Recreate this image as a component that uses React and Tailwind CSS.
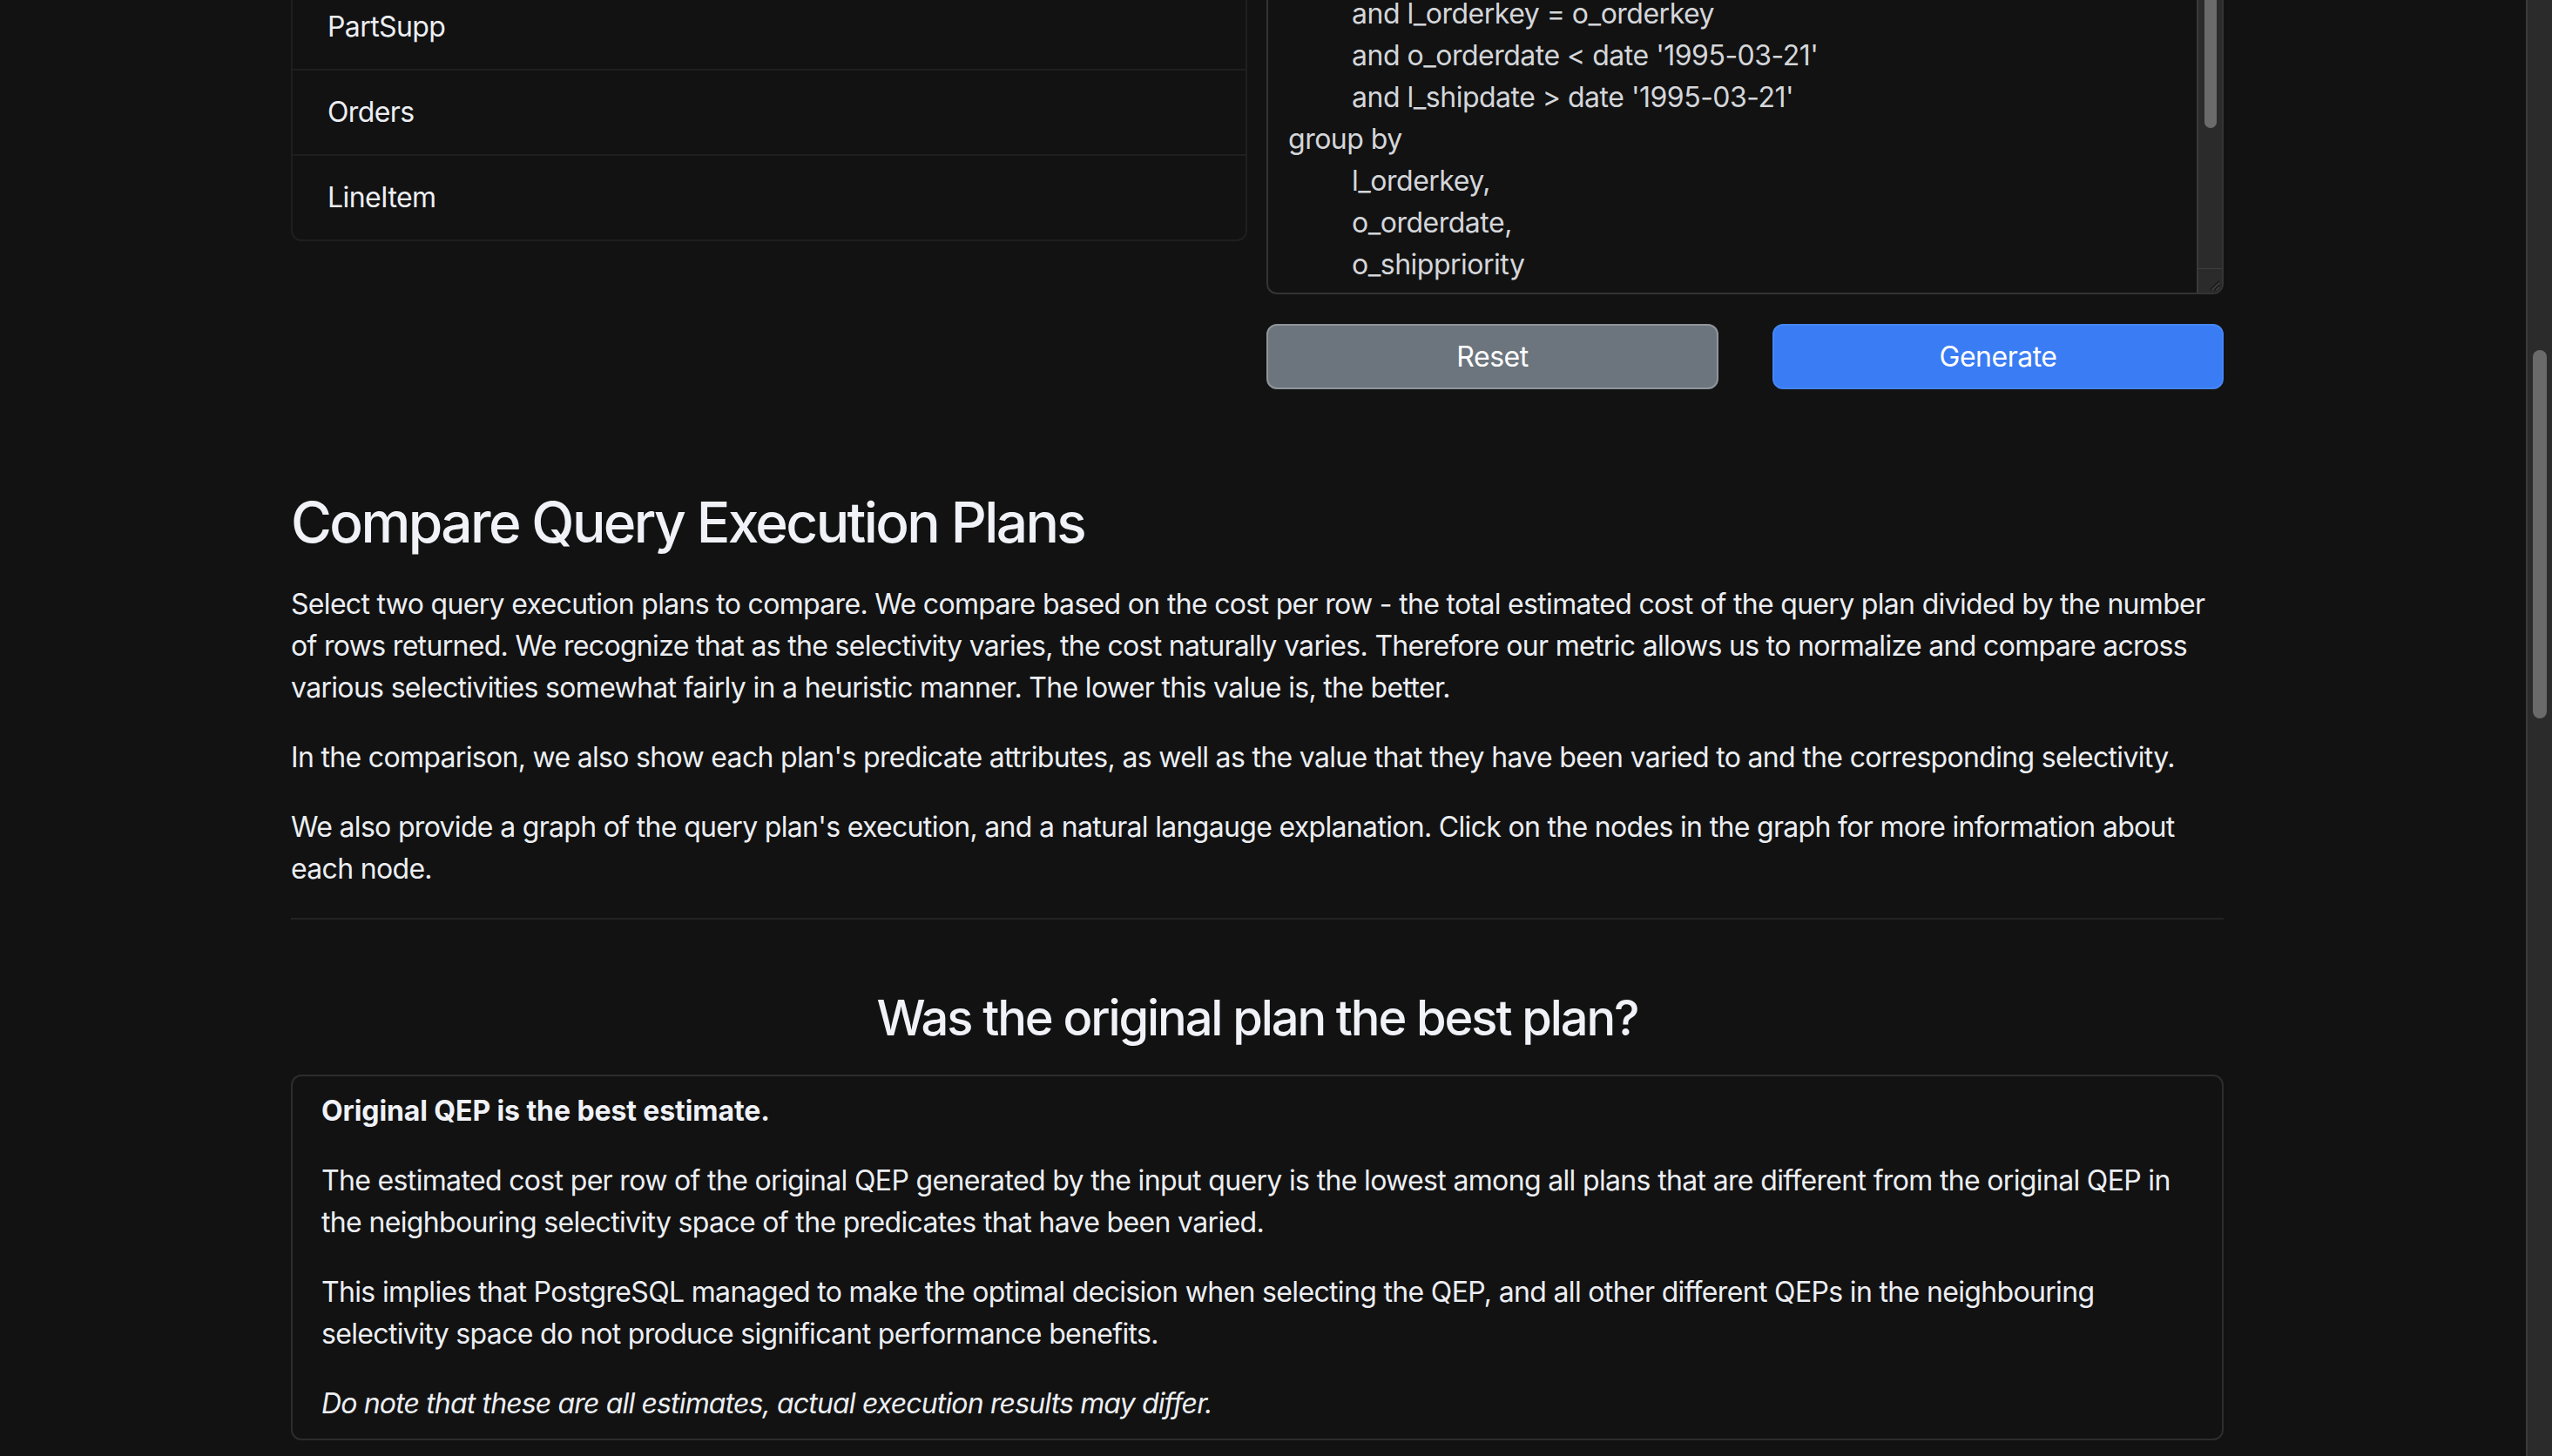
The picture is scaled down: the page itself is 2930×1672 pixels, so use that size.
import React from "react";

const queryLines = [
  { t: "select", i: false },
  { t: "l_orderkey,", i: true },
  { t: "sum(l_extendedprice * (1 - l_discount)) as revenue,", i: true },
  { t: "o_orderdate,", i: true },
  { t: "o_shippriority", i: true },
  { t: "from", i: false },
  { t: "customer,", i: true },
  { t: "orders,", i: true },
  { t: "lineitem", i: true },
  { t: "where", i: false },
  { t: "c_mktsegment = 'BUILDING'", i: true },
  { t: "and c_custkey = o_custkey", i: true },
  { t: "and l_orderkey = o_orderkey", i: true },
  { t: "and o_orderdate < date '1995-03-21'", i: true },
  { t: "and l_shipdate > date '1995-03-21'", i: true },
  { t: "group by", i: false },
  { t: "l_orderkey,", i: true },
  { t: "o_orderdate,", i: true },
  { t: "o_shippriority", i: true },
  { t: "order by", i: false },
  { t: "revenue desc,", i: true },
  { t: "o_orderdate", i: true },
  { t: "limit 20;", i: false },
];

function ListRow({ label, last }) {
  return (
    <div
      className={
        "py-[24px] pl-[40px] pr-[32px] text-[32px] leading-[48px] tracking-[-0.6px] text-[#eceef2] " +
        (last ? "" : "border-b-2 border-[#1f1f1f]")
      }
    >
      {label}
    </div>
  );
}

export default function App() {
  return (
    <div className="flex h-[1672px] w-[2930px] overflow-hidden bg-[#121212] font-['Inter','Liberation_Sans',sans-serif] text-[#eceef2]">
      <div className="h-full w-[2900px] overflow-hidden">
        <div className="-mt-[19px] ml-[334px] w-[2219px]">
          {/* Top row: tables list and query */}
          <div className="flex items-start gap-[22px]">
            <div className="w-[1098px] rounded-[12px] border-2 border-[#1f1f1f]">
              <ListRow label="PartSupp" />
              <ListRow label="Orders" />
              <ListRow label="LineItem" last />
            </div>
            <div className="w-[1099px]">
              <div className="flex h-[357px] overflow-hidden rounded-[12px] border-2 border-[#343434] bg-[#121212]">
                <div className="flex-1 overflow-hidden pl-[23px] text-[32px] leading-[48px] tracking-[-0.5px] text-[#d4d6da]">
                  <div className="mt-[-567px] whitespace-pre">
                    {queryLines.map((l, idx) => (
                      <div key={idx} className={l.i ? "pl-[73px]" : ""}>
                        {l.t}
                      </div>
                    ))}
                  </div>
                </div>
                <div className="flex w-[29px] flex-col border-l-2 border-[#3a3a3a] bg-[#2b2b2b]">
                  <div className="flex-1 pt-[2px]">
                    <div className="mx-auto h-[162px] w-[14px] rounded-full bg-[#6b6b6b]" />
                  </div>
                  <div className="flex h-[28px] items-end justify-end border-t border-[#3e3e3e] pb-[2px] pr-[2px]">
                    <svg width="16" height="16" viewBox="0 0 16 16">
                      <path d="M15 5 L5 15" stroke="#1a1a1a" strokeWidth="2" />
                      <path d="M15 10 L10 15" stroke="#1a1a1a" strokeWidth="2" />
                      <path d="M15 6.5 L6.5 15" stroke="#5a5a5a" strokeWidth="1" />
                      <path d="M15 11.5 L11.5 15" stroke="#5a5a5a" strokeWidth="1" />
                    </svg>
                  </div>
                </div>
              </div>
              <div className="mt-[34px] flex gap-[62px]">
                <button className="h-[75px] w-[519px] rounded-[12px] border-2 border-[#8f959b] bg-[#6c757d] text-[32px] tracking-[-0.5px] text-white">
                  Reset
                </button>
                <button className="h-[75px] w-[518px] rounded-[12px] border-2 border-[#4586f6] bg-[#3a7cf4] text-[32px] tracking-[-0.5px] text-white">
                  Generate
                </button>
              </div>
            </div>
          </div>

          {/* Compare section */}
          <h2 className="mt-[115px] mb-[31px] text-[64px] font-medium leading-[1.2] tracking-[-2.6px] text-[#f0f2f7]">
            Compare Query Execution Plans
          </h2>
          <div className="text-[32px] leading-[48px] tracking-[-0.68px]">
            <p className="mb-[32px]">
              Select two query execution plans to compare. We compare based on the cost per row - the total estimated cost of the query plan divided by the number
              <br />
              of rows returned. We recognize that as the selectivity varies, the cost naturally varies. Therefore our metric allows us to normalize and compare across
              <br />
              various selectivities somewhat fairly in a heuristic manner. The lower this value is, the better.
            </p>
            <p className="mb-[32px]">
              In the comparison, we also show each plan's predicate attributes, as well as the value that they have been varied to and the corresponding selectivity.
            </p>
            <p className="mb-[32px]">
              We also provide a graph of the query plan's execution, and a natural langauge explanation. Click on the nodes in the graph for more information about
              <br />
              each node.
            </p>
          </div>
          <hr className="border-t-2 border-[#222222]" />

          <h3 className="mt-[80px] mb-[31px] text-center text-[56px] font-medium leading-[1.2] tracking-[-2.1px] text-[#f0f2f7]">
            Was the original plan the best plan?
          </h3>
          <div className="rounded-[12px] border-2 border-[#2d2d2d] px-[33px] py-[16px] text-[32px] leading-[48px] tracking-[-0.66px]">
            <p className="mb-[32px] font-bold tracking-[-0.1px] text-[#f0f2f7]">Original QEP is the best estimate.</p>
            <p className="mb-[32px]">
              The estimated cost per row of the original QEP generated by the input query is the lowest among all plans that are different from the original QEP in
              <br />
              the neighbouring selectivity space of the predicates that have been varied.
            </p>
            <p className="mb-[32px]">
              This implies that PostgreSQL managed to make the optimal decision when selecting the QEP, and all other different QEPs in the neighbouring
              <br />
              selectivity space do not produce significant performance benefits.
            </p>
            <p className="mb-0 italic tracking-[-0.85px]">Do note that these are all estimates, actual execution results may differ.</p>
          </div>
        </div>
      </div>
      <div className="flex h-full w-[30px] flex-col border-l-2 border-[#3a3a3a] bg-[#2b2b2b] pt-[402px]">
        <div className="mx-auto h-[423px] w-[16px] rounded-full bg-[#6a6a6a]" />
      </div>
    </div>
  );
}
